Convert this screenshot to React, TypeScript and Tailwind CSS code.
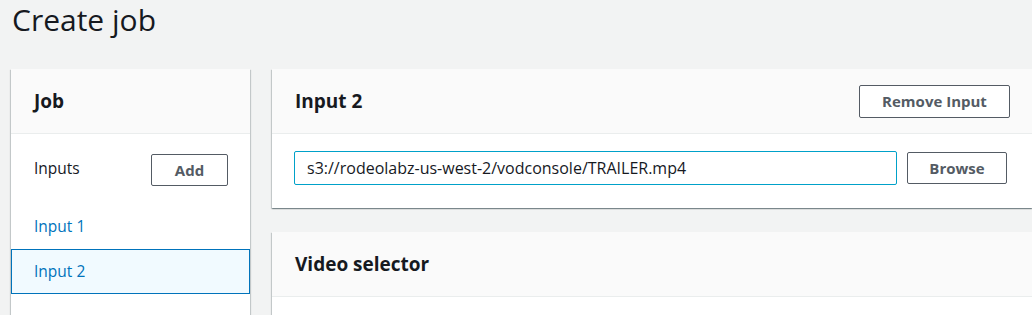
import React from "react";

const font = { fontFamily: '"Open Sans", "Noto Sans", Arial, sans-serif' };

function Btn({ children, className = "" }: { children: React.ReactNode; className?: string }) {
  return (
    <button
      className={`flex items-center justify-center rounded-[2px] border border-[#545b64] bg-white text-[15px] font-bold text-[#545b64] ${className}`}
    >
      {children}
    </button>
  );
}

const shadow =
  "shadow-[0_1px_1px_0_rgba(0,28,36,0.3),1px_1px_1px_0_rgba(0,28,36,0.15),-1px_1px_1px_0_rgba(0,28,36,0.15)]";

export default function App() {
  return (
    <div className="h-[315px] w-[1032px] overflow-hidden bg-[#f2f3f3] text-[#16191f]" style={font}>
      <h1 className="pl-[12px] pt-[1px] text-[30px] leading-[38px] font-normal">Create job</h1>
      <div className="mt-[30px] flex gap-[22px] pl-[11px]">
        {/* Left nav card */}
        <div className={`w-[239px] shrink-0 bg-white ${shadow}`}>
          <div className="flex h-[65px] items-center border-b border-[#eaeded] bg-[#fafafa] pl-[23px]">
            <span className="text-[19px] font-bold">Job</span>
          </div>
          <div className="flex h-[70px] items-center justify-between pl-[23px] pr-[22px]">
            <span className="text-[15.5px]">Inputs</span>
            <Btn className="mt-[2px] h-[32px] w-[77px]">Add</Btn>
          </div>
          <div className="flex h-[45px] items-center pl-[23px] text-[15.5px] text-[#0073bb]">Input 1</div>
          <div className="flex h-[45px] items-center border border-[#0073bb] bg-[#f1faff] pl-[22px] text-[15.5px] text-[#0073bb]">
            Input 2
          </div>
          <div className="h-[40px]" />
        </div>

        {/* Right column */}
        <div className="flex min-w-0 flex-1 flex-col gap-[24px]">
          <div className={`bg-white ${shadow}`}>
            <div className="flex h-[65px] items-center justify-between border-b border-[#eaeded] bg-[#fafafa] pl-[23px] pr-[22px]">
              <span className="text-[19px] font-bold">Input 2</span>
              <Btn className="h-[33px] w-[151px]">Remove Input</Btn>
            </div>
            <div className="flex h-[74px] items-start gap-[10px] pl-[22px] pt-[17px]">
              <div className="flex h-[34px] w-[603px] items-center rounded-[2px] border border-[#00a1c9] pl-[12px] text-[16px]">
                s3://rodeolabz-us-west-2/vodconsole/TRAILER.mp4
              </div>
              <Btn className="mt-[1px] h-[32px] w-[100px]">Browse</Btn>
            </div>
          </div>
          <div className={`bg-white ${shadow}`}>
            <div className="flex h-[65px] items-center border-b border-[#eaeded] bg-[#fafafa] pl-[23px]">
              <span className="text-[19px] font-bold">Video selector</span>
            </div>
            <div className="h-[40px]" />
          </div>
        </div>
      </div>
    </div>
  );
}
